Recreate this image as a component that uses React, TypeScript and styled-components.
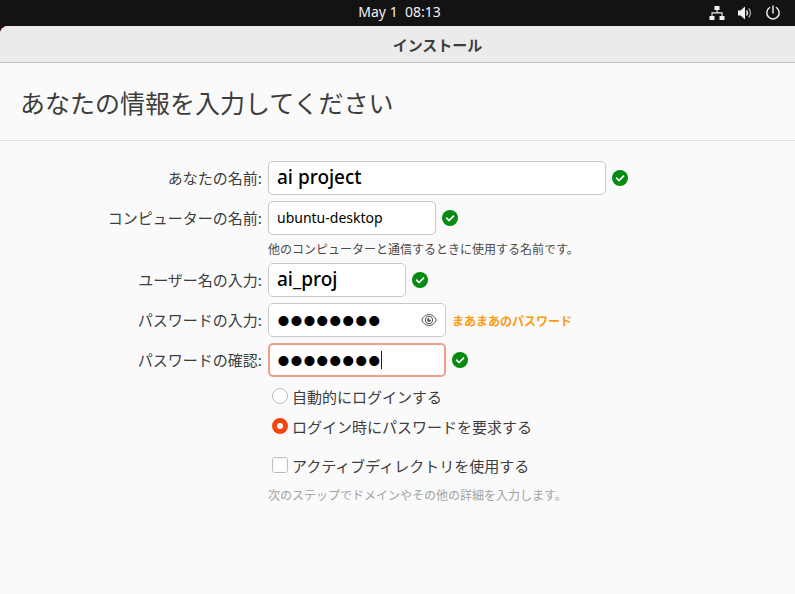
import React, { useState } from "react";
import styled, { createGlobalStyle, css } from "styled-components";

const GlobalStyle = createGlobalStyle`
  *, *::before, *::after { box-sizing: border-box; }
  html, body, #root { height: 100%; }
  body {
    margin: 0;
    background: #fafafa;
    color: #3d3d3d;
    font-family: "Noto Sans", "Noto Sans CJK JP", sans-serif;
    font-size: 15px;
  }
`;

const japanese = css`
  font-family: "Noto Sans CJK JP", sans-serif;
`;

const Desktop = styled.div`
  min-height: 100%;
  display: flex;
  flex-direction: column;
  background: #2c001e;
`;

const TopBar = styled.header`
  display: grid;
  grid-template-columns: 1fr auto 1fr;
  align-items: center;
  height: 26px;
  padding: 0 14px 0 18px;
  background: #131313;
  color: #f2f2f2;
`;

const Clock = styled.time`
  grid-column: 2;
  font-size: 14px;
  line-height: 24px;
  height: 26px;
  white-space: pre;
`;

const Indicators = styled.div`
  display: flex;
  justify-content: flex-end;
  align-items: center;
  gap: 12px;
  height: 24px;
`;

const Window = styled.main`
  flex: 1;
  border-radius: 8px 0 0 0;
  background: #fafafa;
  overflow: hidden;
`;

const TitleBar = styled.div`
  ${japanese}
  display: flex;
  align-items: center;
  justify-content: center;
  height: 37px;
  padding-left: 80px;
  background: #ebebeb;
  border-bottom: 1px solid #bfbfbf;
  font-weight: 700;
  font-size: 15px;
`;

const Heading = styled.h1`
  ${japanese}
  display: flex;
  align-items: center;
  margin: 0;
  height: 78px;
  padding: 0 20px;
  border-bottom: 1px solid #dedede;
  font-weight: 400;
  font-size: 25px;
`;

const Form = styled.form`
  display: grid;
  grid-template-columns: 262px 1fr;
  column-gap: 6px;
  row-gap: 6px;
  padding: 20px 20px 20px 0;
`;

const Label = styled.label`
  ${japanese}
  display: flex;
  align-items: center;
  justify-content: flex-end;
  font-size: 15px;
  line-height: 24px;
`;

const Field = styled.div`
  display: flex;
  align-items: center;
  gap: 6px;
`;

const Box = styled.div<{ $width: number; $active?: boolean }>`
  position: relative;
  display: flex;
  align-items: center;
  width: ${(p) => p.$width}px;
  height: 34px;
  border-radius: 5px;
  background: #fff;
  border: ${(p) => (p.$active ? "2px solid #f39d86" : "1px solid #c8c8c8")};
  padding: 0 ${(p) => (p.$active ? 7 : 8)}px;
`;

const TextInput = styled.input<{ $large?: boolean }>`
  flex: 1;
  min-width: 0;
  height: 30px;
  padding: 0 0 2px;
  border: 0;
  outline: 0;
  background: transparent;
  color: #000;
  font-family: "Noto Sans", sans-serif;
  font-size: ${(p) => (p.$large ? 19 : 14)}px;
  font-weight: ${(p) => (p.$large ? 500 : 400)};
`;

const PasswordInput = styled(TextInput)`
  padding: 2px 0 0;
  font-family: "Liberation Sans", sans-serif;
  font-size: 37px;
  line-height: 28px;
`;

const Caret = styled.span`
  position: absolute;
  left: 111px;
  top: 6px;
  width: 1px;
  height: 18px;
  background: #222;
`;

const IconButton = styled.button`
  display: flex;
  padding: 0;
  border: 0;
  background: none;
  color: #555;
`;

const Hint = styled.p<{ $muted?: boolean }>`
  ${japanese}
  grid-column: 2;
  margin: 0;
  font-size: 12px;
  line-height: 16px;
  color: ${(p) => (p.$muted ? "#a3a3a3" : "#4a4a4a")};
`;

const Strength = styled.output`
  ${japanese}
  color: #f99b11;
  font-size: 12px;
  font-weight: 700;
`;

const Options = styled.div`
  grid-column: 2;
  display: flex;
  flex-direction: column;
  gap: 4px;
  padding-bottom: 7px;
`;

const Option = styled.label`
  ${japanese}
  display: flex;
  align-items: center;
  gap: 4px;
  height: 26px;
  padding-left: 4px;
  font-size: 15px;
`;

const Choice = styled.input`
  appearance: none;
  flex: none;
  width: 16px;
  height: 16px;
  margin: 0;
  border: 1px solid #bdbdbd;
  border-radius: ${(p) => (p.type === "radio" ? "50%" : "3px")};
  background: #fff;
  &:checked {
    border: 5px solid #f5450f;
  }
`;

const Directory = styled.div`
  grid-column: 2;
  display: flex;
  flex-direction: column;
  gap: 9px;
`;

const NetworkIcon = () => (
  <svg width="16" height="16" viewBox="0 0 16 16" fill="currentColor" aria-hidden="true">
    <path d="M5.500 1h5v4H8.600v2.300h5V11H15.500v4h-5v-4h2V8.500h-9V11h2v4h-5v-4h2V7.300h5V5H5.500z" />
  </svg>
);

const VolumeIcon = () => (
  <svg width="16" height="16" viewBox="0 0 16 16" aria-hidden="true">
    <path d="M1 5.500h2.500L8 1.500v13l-4.500-4H1z" fill="currentColor" />
    <path d="M9.500 5.500q2 2.500 0 5" fill="none" stroke="currentColor" strokeWidth="1.300" />
    <path d="M11.800 3.500q3.400 4.500 0 9" fill="none" stroke="#aaa" strokeWidth="1.300" />
  </svg>
);

const PowerIcon = () => (
  <svg width="16" height="16" viewBox="0 0 16 16" fill="none" stroke="currentColor" strokeWidth="1.400" strokeLinecap="round" aria-hidden="true">
    <path d="M8 1v7M4.700 2.500a6.200 6.200 0 1 0 6.600 0" />
  </svg>
);

const Check = () => (
  <svg width="16" height="16" viewBox="0 0 16 16" role="img" aria-label="OK">
    <circle cx="8" cy="8" r="8" fill="#058a12" />
    <path d="M4.200 7.700 7 10.500l5-4.800" fill="none" stroke="#fff" strokeWidth="1.700" />
  </svg>
);

const EyeIcon = () => (
  <svg width="16" height="16" viewBox="0 0 16 16" fill="none" stroke="currentColor" aria-hidden="true">
    <path d="M.8 8c1.400-3.700 4.200-5.500 7.200-5.500S13.800 4.300 15.200 8c-1.400 3.700-4.200 5.500-7.200 5.500S2.200 11.700.8 8z" />
    <circle cx="8" cy="8" r="3.700" />
    <path d="M8 6.300a1.700 1.700 0 1 0 1.700 1.700H8z" fill="currentColor" strokeWidth=".5" />
  </svg>
);

export default function App() {
  const [name, setName] = useState("ai project");
  const [host, setHost] = useState("ubuntu-desktop");
  const [user, setUser] = useState("ai_proj");
  const [password, setPassword] = useState("password");
  const [confirm, setConfirm] = useState("password");
  const [login, setLogin] = useState("require");
  const [directory, setDirectory] = useState(false);

  return (
    <>
      <GlobalStyle />
      <Desktop>
        <TopBar>
          <Clock>{"May 1  08:13"}</Clock>
          <Indicators>
            <NetworkIcon />
            <VolumeIcon />
            <PowerIcon />
          </Indicators>
        </TopBar>
        <Window lang="ja">
          <TitleBar>インストール</TitleBar>
          <Heading>あなたの情報を入力してください</Heading>
          <Form>
            <Label htmlFor="name">あなたの名前:</Label>
            <Field>
              <Box $width={338}>
                <TextInput id="name" $large value={name} onChange={(e) => setName(e.target.value)} />
              </Box>
              <Check />
            </Field>

            <Label htmlFor="host">コンピューターの名前:</Label>
            <Field>
              <Box $width={168}>
                <TextInput id="host" value={host} onChange={(e) => setHost(e.target.value)} />
              </Box>
              <Check />
            </Field>
            <Hint>他のコンピューターと通信するときに使用する名前です。</Hint>

            <Label htmlFor="user">ユーザー名の入力:</Label>
            <Field>
              <Box $width={138}>
                <TextInput id="user" $large value={user} onChange={(e) => setUser(e.target.value)} />
              </Box>
              <Check />
            </Field>

            <Label htmlFor="password">パスワードの入力:</Label>
            <Field>
              <Box $width={178}>
                <PasswordInput id="password" type="password" value={password} onChange={(e) => setPassword(e.target.value)} />
                <IconButton type="button" aria-label="パスワードを表示">
                  <EyeIcon />
                </IconButton>
              </Box>
              <Strength htmlFor="password">まあまあのパスワード</Strength>
            </Field>

            <Label htmlFor="confirm">パスワードの確認:</Label>
            <Field>
              <Box $width={178} $active>
                <PasswordInput id="confirm" type="password" value={confirm} onChange={(e) => setConfirm(e.target.value)} />
                <Caret />
              </Box>
              <Check />
            </Field>

            <Options>
              <Option>
                <Choice type="radio" name="login" checked={login === "auto"} onChange={() => setLogin("auto")} />
                自動的にログインする
              </Option>
              <Option>
                <Choice type="radio" name="login" checked={login === "require"} onChange={() => setLogin("require")} />
                ログイン時にパスワードを要求する
              </Option>
            </Options>

            <Directory>
              <Option>
                <Choice type="checkbox" checked={directory} onChange={(e) => setDirectory(e.target.checked)} />
                アクティブディレクトリを使用する
              </Option>
              <Hint $muted>次のステップでドメインやその他の詳細を入力します。</Hint>
            </Directory>
          </Form>
        </Window>
      </Desktop>
    </>
  );
}
